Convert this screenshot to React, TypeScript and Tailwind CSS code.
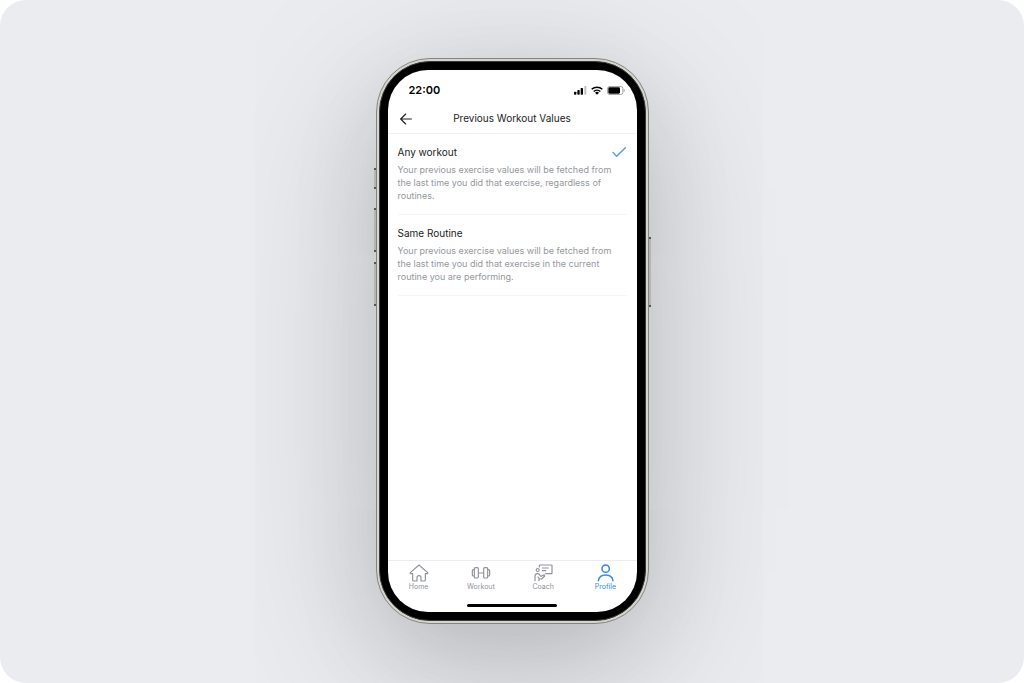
import { useState } from 'react'
import type { ReactNode } from 'react'

const OPTIONS = [
  {
    id: 'any',
    title: 'Any workout',
    text: 'Your previous exercise values will be fetched from the last time you did that exercise, regardless of routines.',
  },
  {
    id: 'same',
    title: 'Same Routine',
    text: 'Your previous exercise values will be fetched from the last time you did that exercise in the current routine you are performing.',
  },
]

function HomeIcon() {
  return (
    <svg width="20" height="18" viewBox="0 0 60 54" fill="none" stroke="currentColor" strokeWidth="3.500" strokeLinejoin="round" strokeLinecap="round">
      <path d="M30 3 4 26v3h7v19a3 3 0 0 0 3 3h10V41c0-8 12-8 12 0v10h10a3 3 0 0 0 3-3V29h7v-3Z" />
    </svg>
  )
}

function WorkoutIcon() {
  return (
    <svg width="20" height="18" viewBox="0 0 60 54" fill="none" stroke="currentColor" strokeWidth="3.500" strokeLinejoin="round">
      <rect x="10" y="11" width="12" height="31" rx="3" />
      <rect x="38" y="11" width="12" height="31" rx="3" />
      <path d="M10 17H7a3 3 0 0 0-3 3v13a3 3 0 0 0 3 3h3M50 17h3a3 3 0 0 1 3 3v13a3 3 0 0 1-3 3h-3M22 27h16" />
    </svg>
  )
}

function CoachIcon() {
  return (
    <svg width="20" height="18" viewBox="0 0 60 54" fill="none" stroke="currentColor" strokeWidth="3.500" strokeLinejoin="round" strokeLinecap="round">
      <path d="M19 9V5a2 2 0 0 1 2-2h34a2 2 0 0 1 2 2v22a2 2 0 0 1-2 2H38M28 12h18M28 20h10" />
      <circle cx="14" cy="18" r="4.500" />
      <path d="M6 50V36c0-4 3-7 8-7 4 0 6 2 8 6l3 2 8-5 2 4-9 9h-6l-5-6M18 43v7" />
    </svg>
  )
}

function ProfileIcon() {
  return (
    <svg width="20" height="18" viewBox="0 0 60 54" fill="none" stroke="currentColor" strokeWidth="4.500" strokeLinecap="round">
      <circle cx="32" cy="14" r="11" />
      <path d="M10 50c2-11 10-17 22-17s20 6 22 17" />
    </svg>
  )
}

const TABS: { label: string; icon: ReactNode }[] = [
  { label: 'Home', icon: <HomeIcon /> },
  { label: 'Workout', icon: <WorkoutIcon /> },
  { label: 'Coach', icon: <CoachIcon /> },
  { label: 'Profile', icon: <ProfileIcon /> },
]

function StatusBar() {
  return (
    <div className="flex h-10 items-center justify-between pr-3 pl-[21px] text-black">
      <span className="text-[11px] font-semibold">22:00</span>
      <div className="flex items-center gap-1">
        <svg width="13" height="9" viewBox="0 0 39 27" fill="currentColor">
          <rect x="0" y="17" width="7" height="9" rx="2" />
          <rect x="10" y="12" width="7" height="14" rx="2" />
          <rect x="20" y="6" width="7" height="20" rx="2" />
          <rect x="31" y="0" width="6" height="26" rx="2" opacity="0.25" />
        </svg>
        <svg width="12" height="9" viewBox="0 0 36 27" fill="none" stroke="currentColor" strokeWidth="4.500">
          <path d="M2 10a23 23 0 0 1 32 0M8 16.500a14.500 14.500 0 0 1 20 0" />
          <path d="m18 26-6-6a9 9 0 0 1 12 0Z" fill="currentColor" stroke="none" />
        </svg>
        <svg width="18" height="9" viewBox="0 0 54 27" fill="currentColor">
          <rect x="1.500" y="1.500" width="46" height="24" rx="6" fill="none" stroke="currentColor" strokeWidth="2.500" opacity="0.4" />
          <rect x="4" y="4" width="35" height="19" rx="4" />
          <path d="M50 9c4 1 4 8 0 9Z" opacity="0.4" />
        </svg>
      </div>
    </div>
  )
}

function Screen() {
  const [selected, setSelected] = useState('any')

  return (
    <div className="flex grow flex-col overflow-hidden rounded-[40px] bg-white">
      <StatusBar />

      <header className="grid h-6 grid-cols-[1fr_auto_1fr] items-center border-b border-[#f0f0f1] px-3 pb-1.5">
        <button type="button" aria-label="Back" className="w-3 text-[#222]">
          <svg className="block" width="12" height="12" viewBox="0 0 36 36" fill="none" stroke="currentColor" strokeWidth="3.500" strokeLinecap="round" strokeLinejoin="round">
            <path d="M34 18H2M17 3 2 18l15 15" />
          </svg>
        </button>
        <h1 className="text-[10px] text-[#1c1c1e]">Previous Workout Values</h1>
      </header>

      <main className="grow px-2.5">
        {OPTIONS.map((o) => (
          <label key={o.id} className="block cursor-pointer border-b border-[#f5f5f6] pt-2.5 pb-3">
            <span className="flex items-center justify-between">
              <span className="text-[10px] leading-4 text-[#1c1c1e]">{o.title}</span>
              <input
                type="radio"
                name="previous-values"
                checked={selected === o.id}
                onChange={() => setSelected(o.id)}
                className="peer sr-only"
              />
              <svg className="hidden text-[#4a97f8] peer-checked:block" width="15" height="12" viewBox="0 0 45 36" fill="none" stroke="currentColor" strokeWidth="4" strokeLinecap="round" strokeLinejoin="round">
                <path d="m3 19 11 12L40 5" />
              </svg>
            </span>
            <span className="mt-[3px] block pr-2 text-[9px] leading-[13px] text-[#94979d]">{o.text}</span>
          </label>
        ))}
      </main>

      <nav className="grid grid-cols-4 border-t border-[#ececee] pt-[3px]">
        {TABS.map((t) => (
          <a
            key={t.label}
            href="#"
            aria-current={t.label === 'Profile' ? 'page' : undefined}
            className="flex flex-col items-center gap-px text-[#8f9399] aria-[current=page]:text-[#2f86f0]"
          >
            {t.icon}
            <span className="text-[7px] leading-[8px]">{t.label}</span>
          </a>
        ))}
      </nav>
      <div className="mx-auto mt-[13px] mb-[5px] h-[3px] w-[90px] rounded-full bg-black" />
    </div>
  )
}

export default function App() {
  return (
    <div className="bg-white font-['Inter',sans-serif]">
      <div className="flex min-h-screen items-center justify-center overflow-hidden rounded-[26px] bg-[#ebecf0] pb-px">
        <div className="relative flex h-[566px] w-[273px] rounded-[54px] border border-[#85857f] bg-[#d5d5d0] p-[2px] shadow-[0_30px_90px_rgba(0,0,0,0.1),0_40px_180px_rgba(0,0,0,0.18)]">
          {/* side buttons */}
          <i className="absolute top-[109px] -left-[3px] h-[21px] w-[2px] border-y-2 border-[#55554f] bg-[#b5b5b1]" />
          <i className="absolute top-[149px] -left-[3px] h-11 w-[2px] border-y-2 border-[#55554f] bg-[#b5b5b1]" />
          <i className="absolute top-[203px] -left-[3px] h-11 w-[2px] border-y-2 border-[#55554f] bg-[#b5b5b1]" />
          <i className="absolute top-[178px] -right-[3px] h-[70px] w-[2px] border-y-2 border-[#55554f] bg-[#b5b5b1]" />

          <div className="flex grow rounded-[51px] border border-[#3a3a3a] bg-black p-2">
            <Screen />
          </div>
        </div>
      </div>
    </div>
  )
}
